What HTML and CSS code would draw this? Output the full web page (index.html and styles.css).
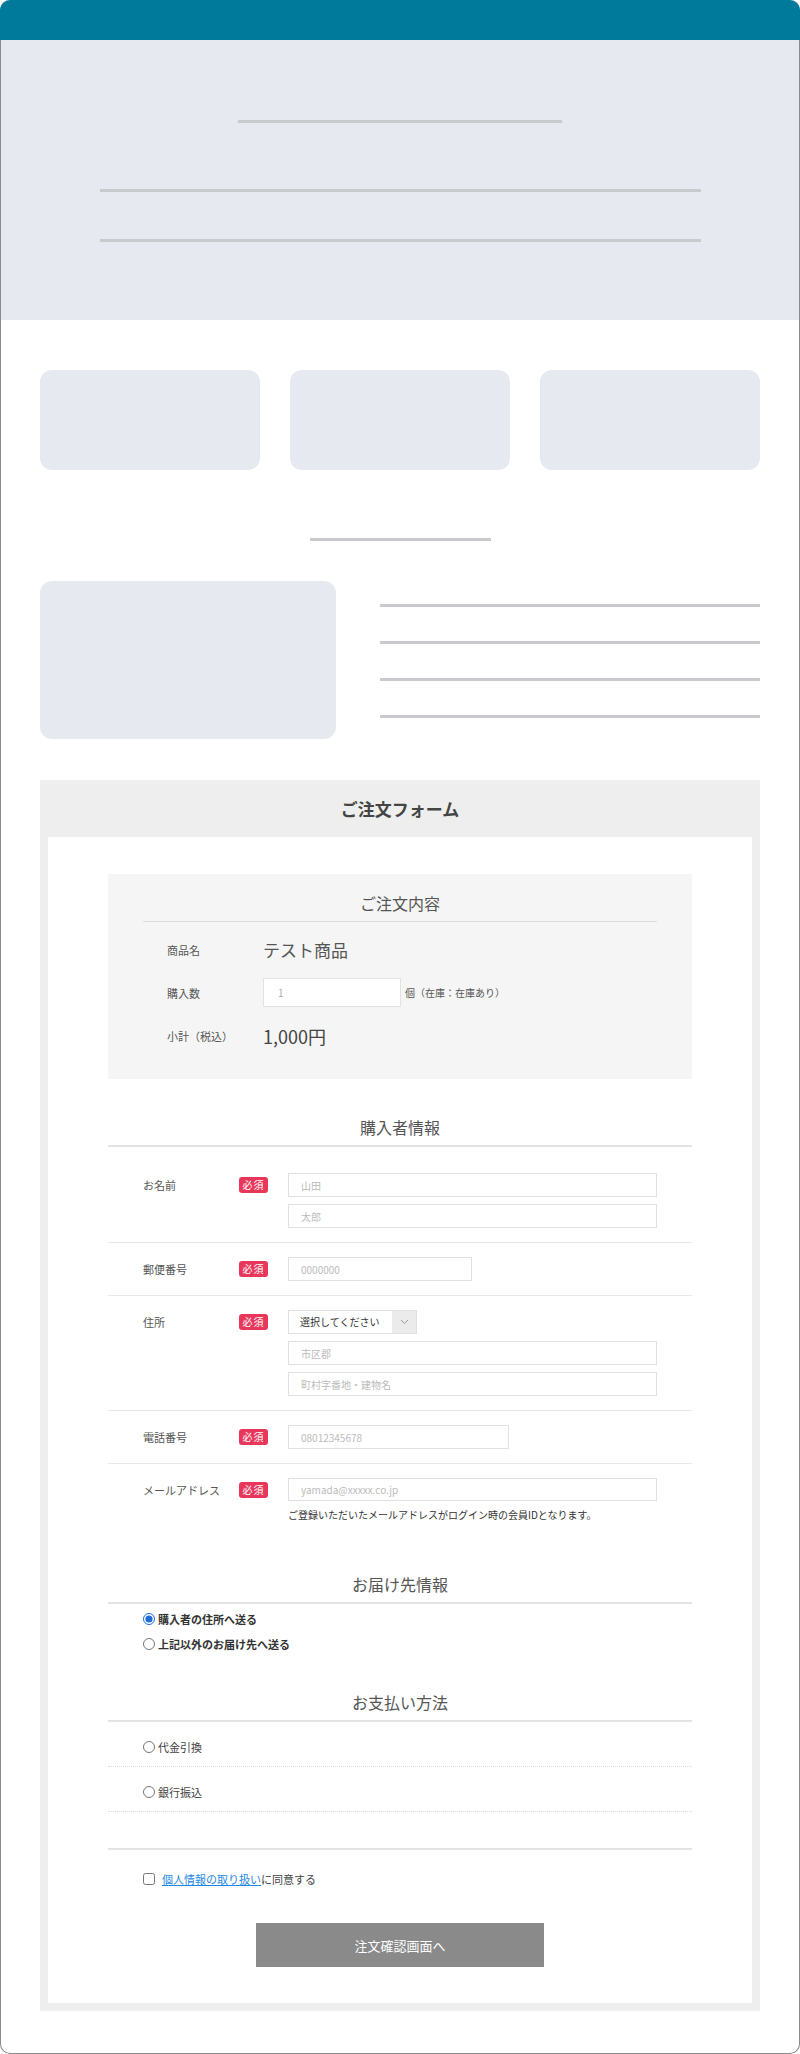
FILE: index.html
```html
<!DOCTYPE html>
<html lang="ja">
<head>
<meta charset="utf-8">
<title>ご注文フォーム</title>
<link rel="stylesheet" href="styles.css">
</head>
<body>
<div class="window">
  <div class="topbar"></div>
  <div class="hero">
    <div class="hero-line short"></div>
    <div class="hero-line long"></div>
    <div class="hero-line long"></div>
  </div>
  <div class="container">
    <div class="cards">
      <div class="card"></div>
      <div class="card"></div>
      <div class="card"></div>
    </div>
    <div class="divider"></div>
    <div class="feature">
      <div class="feature-img"></div>
      <div class="feature-lines">
        <div class="feature-line"></div>
        <div class="feature-line"></div>
        <div class="feature-line"></div>
        <div class="feature-line"></div>
      </div>
    </div>

    <div class="form">
      <div class="form-head">ご注文フォーム</div>
      <div class="form-body">
        <div class="order">
          <div class="order-title">ご注文内容</div>
          <div class="order-row">
            <div class="order-label">商品名</div>
            <div class="order-value">テスト商品</div>
          </div>
          <div class="order-row">
            <div class="order-label">購入数</div>
            <input class="qty" type="text" value="1">
            <span class="stock">個（在庫：在庫あり）</span>
          </div>
          <div class="order-row">
            <div class="order-label">小計（税込）</div>
            <div class="order-value price">1,000円</div>
          </div>
        </div>

        <div class="sec-title">購入者情報</div>
        <div class="rows">
          <div class="row">
            <div class="row-label">お名前</div>
            <span class="badge">必須</span>
            <div class="fields">
              <input class="field" type="text" placeholder="山田">
              <input class="field" type="text" placeholder="太郎">
            </div>
          </div>
          <div class="row">
            <div class="row-label">郵便番号</div>
            <span class="badge">必須</span>
            <div class="fields">
              <input class="field zip" type="text" placeholder="0000000">
            </div>
          </div>
          <div class="row">
            <div class="row-label">住所</div>
            <span class="badge">必須</span>
            <div class="fields">
              <div class="select">
                <span class="select-text">選択してください</span>
                <span class="select-arrow"><svg width="9" height="6" viewBox="0 0 9 6"><path d="M1 1l3.5 3.5L8 1" fill="none" stroke="#999" stroke-width="1"/></svg></span>
              </div>
              <input class="field" type="text" placeholder="市区郡">
              <input class="field" type="text" placeholder="町村字番地・建物名">
            </div>
          </div>
          <div class="row">
            <div class="row-label">電話番号</div>
            <span class="badge">必須</span>
            <div class="fields">
              <input class="field tel" type="text" placeholder="08012345678">
            </div>
          </div>
          <div class="row">
            <div class="row-label">メールアドレス</div>
            <span class="badge">必須</span>
            <div class="fields">
              <input class="field mail" type="text" placeholder="yamada@xxxxx.co.jp">
              <div class="note">ご登録いただいたメールアドレスがログイン時の会員IDとなります。</div>
            </div>
          </div>
        </div>

        <div class="sec-title">お届け先情報</div>
        <div class="radios">
          <label class="radio strong"><input type="radio" name="dest" checked>購入者の住所へ送る</label>
          <label class="radio strong"><input type="radio" name="dest">上記以外のお届け先へ送る</label>
        </div>

        <div class="sec-title">お支払い方法</div>
        <div class="pays">
          <label class="pay"><input type="radio" name="pay">代金引換</label>
          <label class="pay"><input type="radio" name="pay">銀行振込</label>
        </div>

        <div class="agree-line"></div>
        <label class="agree"><input type="checkbox"><a href="#" class="agree-link">個人情報の取り扱い</a>に同意する</label>

        <div class="submit-wrap">
          <button class="submit" type="button">注文確認画面へ</button>
        </div>
      </div>
    </div>
  </div>
</div>
</body>
</html>
```

FILE: styles.css
```css
html, body {
  margin: 0;
  padding: 0;
  background: #fff;
}

body {
  font-family: "Noto Sans CJK JP", "Noto Sans", sans-serif;
  color: #444;
}

.window {
  width: 800px;
  height: 2054px;
  box-sizing: border-box;
  border: 1px solid #8c8c8c;
  border-top: 0;
  border-radius: 10px;
  background: #fff;
}

.topbar {
  height: 40px;
  margin: 0 -1px;
  background: #007a9b;
  border-radius: 10px 10px 0 0;
}

.hero {
  height: 280px;
  box-sizing: border-box;
  padding-top: 80px;
  background: #e6e9f0;
  display: flex;
  flex-direction: column;
  align-items: center;
}

.hero-line {
  height: 3px;
  background: #c9cacd;
}

.hero-line.short {
  width: 324px;
  margin-bottom: 66px;
}

.hero-line.long {
  width: 601px;
}

.hero-line.long + .hero-line.long {
  margin-top: 47px;
}

.container {
  width: 720px;
  margin: 0 auto;
}

.cards {
  display: grid;
  grid-template-columns: repeat(3, 1fr);
  gap: 30px;
  margin-top: 50px;
}

.card {
  height: 100px;
  border-radius: 12px;
  background: #e6e9f0;
}

.divider {
  width: 181px;
  height: 3px;
  margin: 68px auto 0;
  background: #c9cacd;
}

.feature {
  display: flex;
  gap: 44px;
  margin-top: 40px;
}

.feature-img {
  width: 296px;
  height: 158px;
  border-radius: 12px;
  background: #e6e9f0;
}

.feature-lines {
  flex: 1;
  display: flex;
  flex-direction: column;
  gap: 34px;
  padding-top: 23px;
}

.feature-line {
  height: 3px;
  background: #c9cacd;
}

/* form */
.form {
  margin-top: 41px;
}

.form-head {
  height: 57px;
  display: flex;
  align-items: center;
  justify-content: center;
  background: #eee;
  font-size: 17px;
  font-weight: bold;
  color: #444;
}

.form-body {
  border: 8px solid #eee;
  border-top: 0;
  padding: 37px 60px 36px;
}

.order {
  background: #f5f5f5;
  padding: 18px 35px 28px;
}

.order-title {
  font-size: 16px;
  line-height: 22px;
  text-align: center;
  color: #555;
  padding-bottom: 7px;
  border-bottom: 1px solid #dcdcdc;
}

.order-row {
  display: flex;
  align-items: center;
  margin-top: 13px;
}

.order-row:last-child {
  margin-top: 14px;
}

.order-label {
  width: 96px;
  padding-left: 24px;
  font-size: 11px;
  color: #555;
}

.order-value {
  font-size: 17px;
  line-height: 30px;
  color: #555;
}

.order-value.price {
  font-size: 18px;
  color: #444;
}

.qty {
  width: 138px;
  height: 29px;
  box-sizing: border-box;
  border: 1px solid #e2e2e2;
  padding: 0 14px;
  font-family: inherit;
  font-size: 10px;
  color: #aaa;
  background: #fff;
  outline: none;
}

.stock {
  margin-left: 4px;
  font-size: 10px;
  color: #555;
}

.sec-title {
  margin-top: 36px;
  font-size: 16px;
  line-height: 24px;
  text-align: center;
  color: #555;
  padding-bottom: 6px;
  border-bottom: 2px solid #e3e3e3;
}

.rows {
  margin-top: 12px;
}

.row {
  display: flex;
  align-items: flex-start;
  padding: 14px 35px;
  border-bottom: 1px solid #e8e8e8;
}

.row:last-child {
  border-bottom: 0;
}

.row-label {
  width: 96px;
  font-size: 11px;
  line-height: 24px;
  color: #555;
}

.badge {
  width: 29px;
  height: 16px;
  margin: 4px 20px 0 0;
  border-radius: 3px;
  background: #e8375a;
  color: #fff;
  font-size: 10px;
  line-height: 16px;
  text-align: center;
  letter-spacing: 1px;
}

.fields {
  display: flex;
  flex-direction: column;
  gap: 7px;
}

.field {
  width: 369px;
  height: 24px;
  box-sizing: border-box;
  border: 1px solid #e0e0e0;
  padding: 0 12px;
  font-family: inherit;
  font-size: 10px;
  color: #333;
  background: #fff;
  outline: none;
}

.field::placeholder {
  color: #bbb;
}

.field.zip {
  width: 184px;
}

.field.tel {
  width: 221px;
}

.field.mail {
  height: 23px;
}

.select {
  width: 129px;
  height: 24px;
  box-sizing: border-box;
  border: 1px solid #e0e0e0;
  display: flex;
  background: #fff;
}

.select-text {
  flex: 1;
  padding-left: 11px;
  font-size: 10px;
  line-height: 22px;
  color: #333;
}

.select-arrow {
  width: 24px;
  background: #ebebeb;
  display: flex;
  align-items: center;
  justify-content: center;
}

.note {
  font-size: 10px;
  line-height: 14px;
  color: #333;
}

.radios {
  margin-top: 5px;
  padding: 0 35px;
  display: flex;
  flex-direction: column;
  gap: 5px;
}

.radio,
.pay {
  display: flex;
  align-items: center;
  font-size: 11px;
  line-height: 20px;
  color: #444;
}

.radio.strong {
  font-weight: bold;
  color: #333;
}

.radio input,
.pay input {
  width: 12px;
  height: 12px;
  margin: 0 3px 0 0;
  accent-color: #1f6fd6;
}

.pays {
  display: flex;
  flex-direction: column;
}

.pay {
  padding: 15px 35px 9px;
  border-bottom: 1px dotted #dcdcdc;
}

.agree-line {
  margin-top: 36px;
  height: 2px;
  background: #e3e3e3;
}

.agree {
  display: flex;
  align-items: center;
  margin-top: 19px;
  padding: 0 35px;
  font-size: 11px;
  line-height: 20px;
  color: #444;
}

.agree input {
  width: 12px;
  height: 12px;
  margin: 0 7px 0 0;
}

.agree-link {
  color: #1e88e5;
  text-decoration: underline;
}

.submit-wrap {
  display: flex;
  justify-content: center;
  margin-top: 34px;
}

.submit {
  width: 288px;
  height: 44px;
  border: 0;
  background: #8a8a8a;
  color: #fff;
  font-family: inherit;
  font-size: 13px;
}
```
